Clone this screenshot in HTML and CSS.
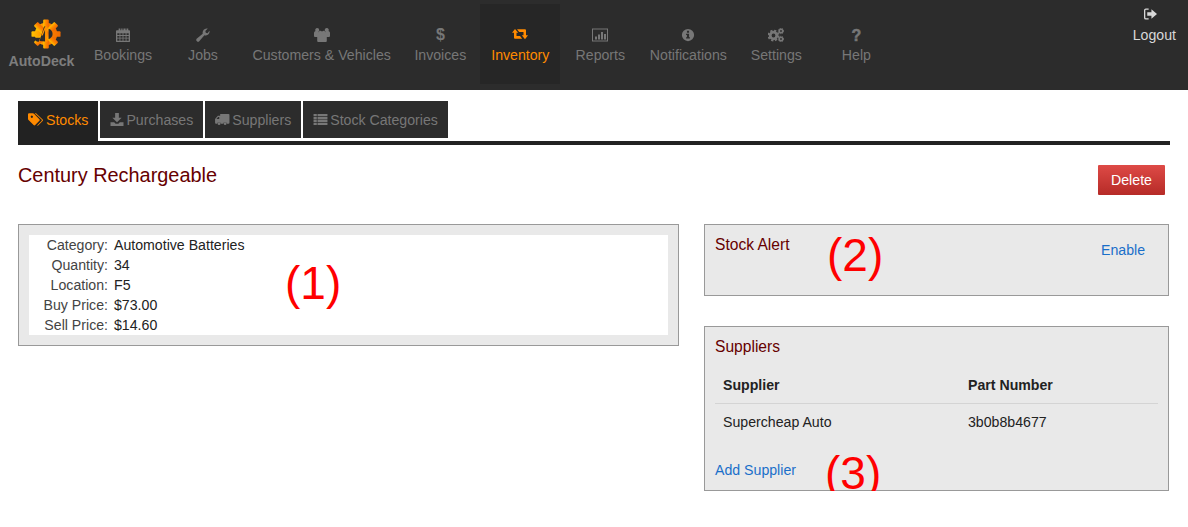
FILE: index.html
```html
<!DOCTYPE html>
<html lang="en">
<head>
    <meta charset="UTF-8">
    <title>AutoDeck - Century Rechargeable</title>
    <link rel="stylesheet" href="styles.css">
</head>
<body>

    <div class="navbar">
        <a class="brand">
            <svg class="brand-logo" viewBox="0 0 32 32">
                <defs>
                    <linearGradient id="gear-fill" x1="0" y1="0" x2="1" y2="0">
                        <stop offset="0" stop-color="#ffc400"/>
                        <stop offset="0.45" stop-color="#ff8a00"/>
                        <stop offset="1" stop-color="#f26a00"/>
                    </linearGradient>
                </defs>
                <g fill="url(#gear-fill)">
                    <circle cx="16" cy="16" r="12"/>
                    <rect x="13" y="0.500" width="6" height="31" rx="1"/>
                    <rect x="0.500" y="13" width="31" height="6" rx="1"/>
                    <rect x="13" y="0.500" width="6" height="31" rx="1" transform="rotate(45 16 16)"/>
                    <rect x="13" y="0.500" width="6" height="31" rx="1" transform="rotate(-45 16 16)"/>
                </g>
                <path d="M9 23.500L14 8l1.500 0v16z" fill="#2c2c2c"/>
                <path d="M4 20h6l-2 4.500-3-1z" fill="#2c2c2c"/>
                <path d="M11 17.500L15 8h2.500v16.500H15v-13l-2.500 6z" fill="#ff9200"/>
                <path d="M18.800 10.500c2.800 1 4.200 3 4.200 5.500s-1.400 4.500-4.200 5.500z" fill="#2c2c2c"/>
            </svg>
            <span class="brand-name">AutoDeck</span>
        </a>

        <a class="nav-item">
            <svg class="nav-icon" viewBox="0 0 16 16"><path fill-rule="evenodd" d="M3 0.500h2v2h1V0.500h1.500v2h1V0.500H11v2h1V0.500h2v2h1a1 1 0 0 1 1 1V15a1 1 0 0 1-1 1H1a1 1 0 0 1-1-1V3.500a1 1 0 0 1 1-1h2zM1.500 6v2h2.500V6zm3.500 0v2h2.500V6zm3.500 0v2H11V6zm3.500 0v2h2.500V6zM1.500 9v2h2.500V9zm3.500 0v2h2.500V9zm3.500 0v2H11V9zm3.500 0v2h2.500V9zM1.500 12v2.500h2.500V12zm3.500 0v2.500h2.500V12zm3.500 0v2.500H11V12zm3.500 0v2.500h2.500V12z"/></svg>
            <span>Bookings</span>
        </a>
        <a class="nav-item">
            <svg class="nav-icon" viewBox="0 0 16 16"><path d="M15.500 3.500c.3 2.600-1.600 5-4.300 5-.6 0-1.100-.1-1.600-.3L3.700 15a2 2 0 0 1-3-2.600l7-5.800c-.8-2.900 1.300-5.900 4.300-6.100.5 0 1 0 1.500.2L10.700 3.500l.5 2 2 .5 2.100-2.800z"/></svg>
            <span>Jobs</span>
        </a>
        <a class="nav-item">
            <svg class="nav-icon nav-icon-wide" viewBox="0 0 16 14"><path d="M3.200 0a2 2 0 0 1 2 2c0 .4-.1.800-.3 1.100L4 4.500V9H1a1 1 0 0 1-1-1V5a2 2 0 0 1 1.500-2A2 2 0 0 1 3.200 0zM12.800 0a2 2 0 0 1 1.700 3A2 2 0 0 1 16 5v3a1 1 0 0 1-1 1h-3V4.500l-.9-1.400A2 2 0 0 1 12.800 0zM6 2.500c.6 1 3.400 1 4 0L12 4.500c.5.500.8 1 .8 1.800V13a1 1 0 0 1-1 1H4.200a1 1 0 0 1-1-1V6.300c0-.8.3-1.300.8-1.800z"/></svg>
            <span>Customers &amp; Vehicles</span>
        </a>
        <a class="nav-item">
            <span class="nav-glyph">$</span>
            <span>Invoices</span>
        </a>
        <a class="nav-item nav-active">
            <svg class="nav-icon nav-icon-wide" viewBox="0 0 16 12"><path d="M3 0L6.200 3.800H4.500V7H8l2.200 2.800H3a1 1 0 0 1-1-1V3.800H0zM5 .3h8a1 1 0 0 1 1 1v5h2l-3 3.900-3.200-3.900h1.700V3H7.200z"/></svg>
            <span>Inventory</span>
        </a>
        <a class="nav-item">
            <svg class="nav-icon nav-icon-wide" viewBox="0 0 16 13"><path fill-rule="evenodd" d="M0 0h16v13H0zM1 1v11h14V1z"/><path d="M3 8h2v3H3zM6 6h2v5H6zM9 3.500h2V11H9zM12 5.500h2V11h-2z"/></svg>
            <span>Reports</span>
        </a>
        <a class="nav-item">
            <svg class="nav-icon" viewBox="0 0 16 16"><path fill-rule="evenodd" d="M8 1a7 7 0 1 1 0 14A7 7 0 0 1 8 1zM6.800 3.200v2.200h2.400V3.200zM5.800 6.500v1.400h1v2.700h-1V12h4.400v-1.400h-1V6.500z"/></svg>
            <span>Notifications</span>
        </a>
        <a class="nav-item">
            <svg class="nav-icon nav-icon-wide" viewBox="0 0 16 14"><g class="cog-lines" fill="none"><circle cx="5.500" cy="7.500" r="3.300" stroke-width="2.800"/><circle cx="5.500" cy="7.500" r="5" stroke-width="1.800" stroke-dasharray="2.200 1.730"/><circle cx="13" cy="3" r="1.700" stroke-width="1.600"/><circle cx="13" cy="3" r="2.700" stroke-width="1" stroke-dasharray="1.200 1"/><circle cx="13" cy="11" r="1.700" stroke-width="1.600"/><circle cx="13" cy="11" r="2.700" stroke-width="1" stroke-dasharray="1.200 1"/></g></svg>
            <span>Settings</span>
        </a>
        <a class="nav-item">
            <span class="nav-glyph nav-glyph-help">?</span>
            <span>Help</span>
        </a>

        <a class="nav-logout">
            <svg class="logout-icon" viewBox="0 0 14 12"><path d="M5 0v1.500H2a.6.6 0 0 0-.6.6v7.800a.6.6 0 0 0 .6.6h3V12H2a2 2 0 0 1-2-2V2a2 2 0 0 1 2-2z"/><path d="M8 .8L14 6l-6 5.200V8H3.500V4H8z"/></svg>
            <span>Logout</span>
        </a>
    </div>

    <div class="content">
        <div class="tabs">
            <a class="tab tab-active">
                <svg class="tab-icon tab-icon-tag" viewBox="0 0 18 14"><path d="M0 1.200A1.200 1.200 0 0 1 1.200 0h4.300a2 2 0 0 1 1.300.6l6 6a1.300 1.300 0 0 1 0 1.800l-4.700 4.800a1.300 1.300 0 0 1-1.800 0l-6-6A2.400 2.400 0 0 1 0 5.800zM3 4a1.300 1.300 0 1 0 0-.100z" fill-rule="evenodd"/><path d="M9 0l7.500 7a1.300 1.300 0 0 1 0 1.800l-4.800 4.800a1.300 1.300 0 0 1-1.500.2l5-5a1.300 1.300 0 0 0 0-1.800L7.500 0z"/></svg>
                <span>Stocks</span>
            </a>
            <a class="tab">
                <svg class="tab-icon tab-icon-down" viewBox="0 0 14 14"><path d="M5 0h4v5h3L7 10 2 5h3z"/><path d="M0 10h4l1.500 1.500h3L10 10h4v4H0z"/></svg>
                <span>Purchases</span>
            </a>
            <a class="tab">
                <svg class="tab-icon" viewBox="0 0 16 14"><path fill-rule="evenodd" d="M5.500 1h9a1 1 0 0 1 1 1v8.500a1 1 0 0 1-1 1h-1.800a2 2 0 0 0-3.900 0H6.200a2 2 0 0 0-3.900 0H1a1 1 0 0 1-1-1V6.500L3 3h2.500V2zM1.500 6.500H4.500V4.200H3.300z"/><circle cx="4.300" cy="11.500" r="1.500"/><circle cx="10.800" cy="11.500" r="1.500"/></svg>
                <span>Suppliers</span>
            </a>
            <a class="tab">
                <svg class="tab-icon" viewBox="0 0 15 14"><path d="M0 1h3.500v2.400H0zM4.300 1H15v2.400H4.300zM0 4.200h3.500v2.400H0zM4.300 4.200H15v2.400H4.300zM0 7.400h3.500v2.400H0zM4.300 7.400H15v2.400H4.300zM0 10.600h3.500V13H0zM4.300 10.600H15V13H4.300z"/></svg>
                <span>Stock Categories</span>
            </a>
        </div>

        <div class="page-head">
            <h1 class="page-title">Century Rechargeable</h1>
            <a class="btn-delete">Delete</a>
        </div>

        <div class="columns">
            <div class="panel panel-details">
                <dl class="details">
                    <dt>Category:</dt><dd>Automotive Batteries</dd>
                    <dt>Quantity:</dt><dd>34</dd>
                    <dt>Location:</dt><dd>F5</dd>
                    <dt>Buy Price:</dt><dd>$73.00</dd>
                    <dt>Sell Price:</dt><dd>$14.60</dd>
                </dl>
                <span class="callout callout-1">(1)</span>
            </div>

            <div class="side">
                <div class="panel panel-alert">
                    <h2 class="panel-title">Stock Alert</h2>
                    <a class="link link-enable">Enable</a>
                    <span class="callout callout-2">(2)</span>
                </div>

                <div class="panel panel-suppliers">
                    <h2 class="panel-title">Suppliers</h2>
                    <table class="supplier-table">
                        <thead>
                            <tr>
                                <th>Supplier</th>
                                <th>Part Number</th>
                            </tr>
                        </thead>
                        <tbody>
                            <tr>
                                <td>Supercheap Auto</td>
                                <td>3b0b8b4677</td>
                            </tr>
                        </tbody>
                    </table>
                    <a class="link">Add Supplier</a>
                    <span class="callout callout-3">(3)</span>
                </div>
            </div>
        </div>
    </div>

</body>
</html>
```

FILE: styles.css
```css
body {
    margin: 0;
    background-color: #fff;
    font-family: "Liberation Sans", Arial, sans-serif;
    font-size: 14.15px;
    line-height: 20px;
    color: #222;
}

.navbar {
    display: flex;
    align-items: stretch;
    height: 90px;
    padding-right: 2px;
    box-sizing: border-box;
    background-color: #2c2c2c;
}

.brand {
    display: flex;
    flex-direction: column;
    align-items: center;
    width: 83px;
    padding-top: 19px;
    box-sizing: border-box;
}

.brand-logo {
    width: 30px;
    height: 30px;
    margin-left: 9px;
}

.brand-name {
    margin-top: 2px;
    font-weight: bold;
    color: #7d7d7d;
}

.nav-item {
    display: flex;
    flex-direction: column;
    align-items: center;
    min-width: 80px;
    height: 80px;
    margin-top: 4px;
    padding: 23px 9.5px 0;
    box-sizing: border-box;
    color: #777;
    fill: #777;
    stroke: #777;
    stroke-width: 0;
}

.nav-item span:last-child {
    margin-top: 3px;
}

.nav-active {
    background-color: #262626;
    color: #ff8a00;
    fill: #ff8a00;
}

.nav-icon {
    width: 14px;
    height: 14px;
    margin-top: 1px;
}

.nav-icon-wide {
    width: 16px;
}

.cog-lines circle {
    fill: none;
}

.nav-glyph {
    height: 15px;
    font-size: 16px;
    font-weight: bold;
    line-height: 15px;
}

.nav-glyph-help {
    padding-top: 1px;
    height: 14px;
    -webkit-text-stroke: 0.5px #777;
}

.nav-logout {
    display: flex;
    flex-direction: column;
    align-items: center;
    margin-left: auto;
    padding: 8px 10px 0;
    color: #d8d8d8;
    fill: #d8d8d8;
}

.logout-icon {
    width: 13px;
    height: 12px;
    margin: 0 7px 5px 0;
}

.content {
    padding: 11px 18px 0;
}

.tabs {
    display: flex;
    align-items: flex-start;
    gap: 2px;
    height: 44px;
    background: linear-gradient(#222, #222) left bottom / 100% 4px no-repeat;
}

.tab {
    display: flex;
    align-items: center;
    gap: 2px;
    height: 37px;
    padding: 0 10px;
    background-color: #2c2c2c;
    color: #777;
    fill: #777;
}

.tab-active {
    height: 44px;
    padding: 0 10px 7px 10px;
    box-sizing: border-box;
    background-color: #222;
    color: #ff8a00;
    fill: #ff8a00;
}

.tab-icon {
    width: 15px;
    height: 13px;
}

.tab-icon-tag {
    width: 16px;
}

.tab-icon-down {
    width: 14px;
}

.page-head {
    display: flex;
    justify-content: space-between;
    align-items: flex-start;
    margin-top: 20px;
    padding-right: 5px;
}

.page-title {
    margin: 0;
    font-size: 19.9px;
    font-weight: normal;
    line-height: 20px;
    color: #660000;
}

.btn-delete {
    width: 67px;
    height: 30px;
    border-radius: 1px;
    background: linear-gradient(#de4a46, #b62b27);
    color: #fff;
    line-height: 30px;
    text-align: center;
}

.columns {
    display: flex;
    align-items: flex-start;
    gap: 25px;
    margin-top: 29px;
}

.panel {
    position: relative;
    padding: 10px;
    box-sizing: border-box;
    border: 1px solid #999;
    background-color: #e9e9e9;
}

.panel-details {
    width: 661px;
}

.side {
    display: flex;
    flex-direction: column;
    gap: 30px;
    width: 465px;
}

.details {
    display: grid;
    grid-template-columns: 79px 1fr;
    column-gap: 6px;
    margin: 0;
    background-color: #fff;
}

.details dt {
    color: #444;
    text-align: right;
}

.details dd {
    margin: 0;
}

.panel-title {
    margin: 0;
    font-size: 15.6px;
    font-weight: normal;
    line-height: 20px;
    color: #660000;
}

.panel-alert {
    display: flex;
    justify-content: space-between;
    align-items: flex-start;
    height: 72px;
}

.link {
    color: #1a6fc9;
}

.link-enable {
    margin: 5px 13px 0 0;
}

.supplier-table {
    width: 100%;
    margin: 10px 0 20px;
    border-collapse: collapse;
}

.supplier-table th,
.supplier-table td {
    padding: 8px;
    text-align: left;
}

.supplier-table th:first-child,
.supplier-table td:first-child {
    width: 229px;
}

.supplier-table th {
    border-bottom: 1px solid #d4d4d4;
}

/* numbered notes put over the screenshot */
.callout {
    position: absolute;
    font-size: 46px;
    line-height: 48px;
    color: #ff0000;
}

.callout-1 {
    left: 266px;
    top: 34px;
}

.callout-2 {
    left: 122px;
    top: 6px;
}

.callout-3 {
    left: 120px;
    top: 122px;
}
```
